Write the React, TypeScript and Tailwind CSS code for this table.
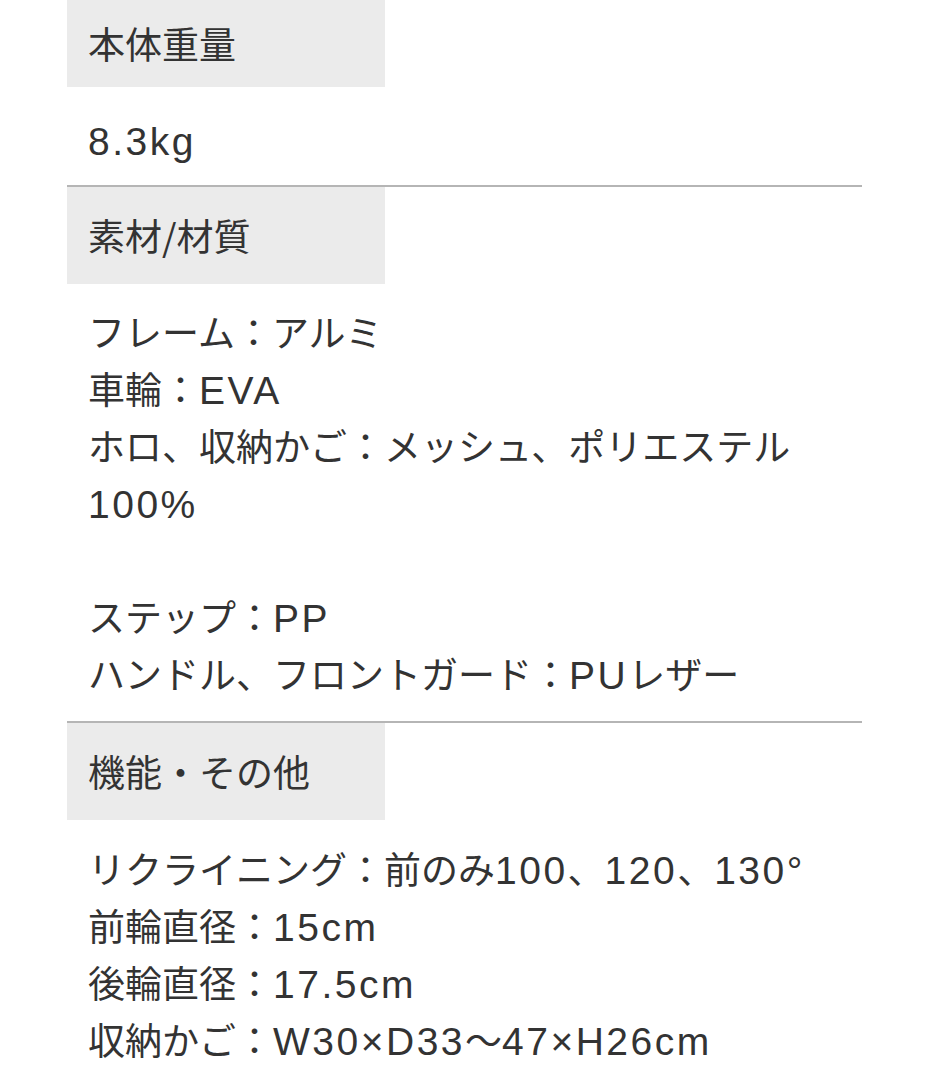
const cjk = { fontFamily: '"Noto Sans CJK JP", "Noto Sans", sans-serif' };

// Latin runs are set in a Helvetica-width face, a touch larger and looser, like the reference
function Mixed({ text }: { text: string }) {
  const parts = text.split(/([\x20-\x7E°×%]+)/);
  return (
    <>
      {parts.map((p, i) =>
        /^[\x20-\x7E°×%]+$/.test(p) ? (
          <span
            key={i}
            className="font-['Liberation_Sans',sans-serif] text-[39px] tracking-[2.5px]"
          >
            {p}
          </span>
        ) : (
          <span key={i}>{p}</span>
        )
      )}
    </>
  );
}

function Label({ children, first }: { children: string; first?: boolean }) {
  return (
    <div
      className={`w-[318px] bg-[#ebebeb] px-[21px] flex items-center text-[37px] text-[#333333] ${
        first ? "h-[87px]" : "h-[97px]"
      }`}
    >
      <div>{children}</div>
    </div>
  );
}

function Lines({ rows, className }: { rows: string[]; className: string }) {
  return (
    <div className={`px-[21px] text-[37px] leading-[57px] text-[#333333] ${className}`}>
      {rows.map((r, i) => (
        <div key={i} className="h-[57px] whitespace-nowrap">
          <Mixed text={r} />
        </div>
      ))}
    </div>
  );
}

export default function App() {
  return (
    <div className="min-h-screen bg-white" style={cjk}>
      <div className="ml-[67px] w-[795px]">
        <Label first>本体重量</Label>
        <Lines rows={["8.3kg"]} className="pt-[24px] pb-[17px]" />
        <div className="h-[2px] bg-[#b5b5b5]" />
        <Label>素材/材質</Label>
        <Lines
          rows={[
            "フレーム：アルミ",
            "車輪：EVA",
            "ホロ、収納かご：メッシュ、ポリエステル",
            "100%",
            "",
            "ステップ：PP",
            "ハンドル、フロントガード：PUレザー",
          ]}
          className="pt-[19px] pb-[19px]"
        />
        <div className="h-[2px] bg-[#b5b5b5]" />
        <Label>機能・その他</Label>
        <Lines
          rows={[
            "リクライニング：前のみ100、120、130°",
            "前輪直径：15cm",
            "後輪直径：17.5cm",
            "収納かご：W30×D33〜47×H26cm",
          ]}
          className="pt-[20px]"
        />
      </div>
    </div>
  );
}
